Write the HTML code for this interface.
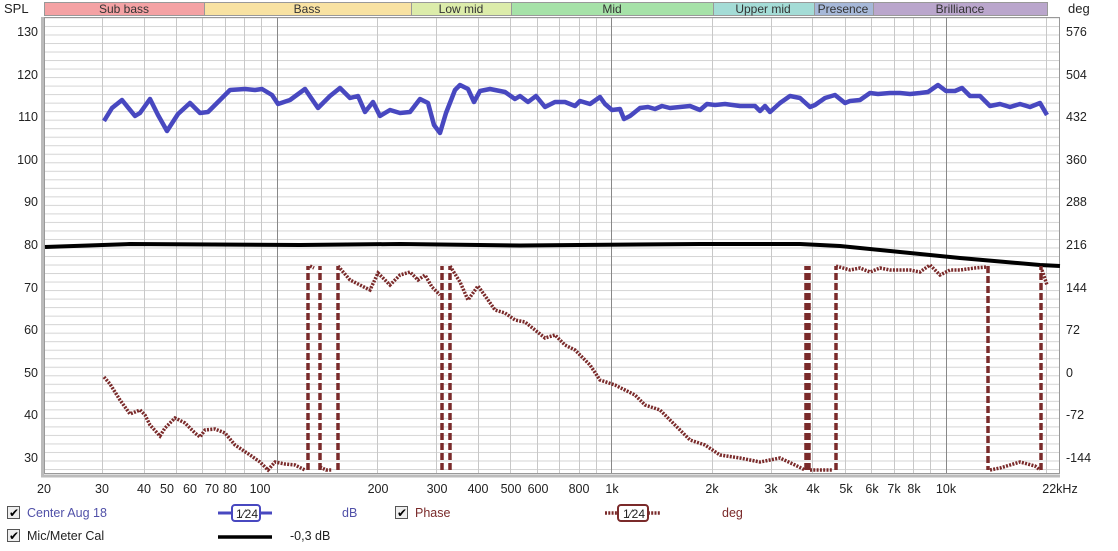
<!DOCTYPE html>
<html><head><meta charset="utf-8"><style>
body{margin:0;background:#fff;width:1118px;height:551px;overflow:hidden;font-family:"Liberation Sans",sans-serif}
svg{position:absolute;left:0;top:0}
</style></head><body>
<svg width="1118" height="551" viewBox="0 0 1118 551" font-family="Liberation Sans, sans-serif" font-size="12.5">
<defs>
<pattern id="hg" x="0" y="0.4" width="10" height="8.52" patternUnits="userSpaceOnUse">
<rect x="0" y="0" width="10" height="1" fill="#d4d4d4"/>
</pattern>
</defs>
<!-- bands -->
<g stroke="#999" stroke-width="1" font-size="12" fill="#333" text-anchor="middle">
<rect x="44.5" y="2.5" width="160" height="13" fill="#f4a2a4"/>
<rect x="204.5" y="2.5" width="207" height="13" fill="#f8e2a2"/>
<rect x="411.5" y="2.5" width="100" height="13" fill="#dcecaa"/>
<rect x="511.5" y="2.5" width="202" height="13" fill="#a6e2a8"/>
<rect x="713.5" y="2.5" width="101" height="13" fill="#a4dcd6"/>
<rect x="814.5" y="2.5" width="59" height="13" fill="#a6b8d8"/>
<rect x="873.5" y="2.5" width="174" height="13" fill="#baa6cc"/>
</g>
<g font-size="12" fill="#333" text-anchor="middle">
<text x="124" y="13">Sub bass</text><text x="307" y="13">Bass</text><text x="461" y="13">Low mid</text><text x="612" y="13">Mid</text><text x="763" y="13">Upper mid</text><text x="843" y="13">Presence</text><text x="960" y="13">Brilliance</text>
</g>
<text x="4" y="13" font-size="13" fill="#222">SPL</text>
<text x="1068" y="13" font-size="13" fill="#222">deg</text>
<!-- plot -->
<rect x="44" y="17" width="1016" height="457" fill="url(#hg)"/>
<g stroke="#c8c8c8" stroke-width="1">
<path d="M102.5 17V474M144.5 17V474M176.5 17V474M202.5 17V474M225.5 17V474M244.5 17V474M261.5 17V474M377.5 17V474M436.5 17V474M478.5 17V474M510.5 17V474M537.5 17V474M559.5 17V474M579.5 17V474M596.5 17V474M712.5 17V474M771.5 17V474M812.5 17V474M845.5 17V474M871.5 17V474M894.5 17V474M913.5 17V474M930.5 17V474M1046.5 17V474"/>
</g>
<g stroke="#888" stroke-width="1"><path d="M277.5 17V474M611.5 17V474M946.5 17V474"/></g>
<rect x="44.5" y="17.5" width="1015" height="456" fill="none" stroke="#999"/>
<path d="M42.5 17V476H1060" fill="none" stroke="#bbb" stroke-width="3"/>
<!-- left labels -->
<g font-size="12.5" fill="#222" text-anchor="end">
<text x="38" y="36">130</text><text x="38" y="79">120</text><text x="38" y="121">110</text><text x="38" y="164">100</text><text x="38" y="206">90</text><text x="38" y="249">80</text><text x="38" y="292">70</text><text x="38" y="334">60</text><text x="38" y="377">50</text><text x="38" y="419">40</text><text x="38" y="462">30</text>
</g>
<g font-size="12.5" fill="#222">
<text x="1066" y="36">576</text><text x="1066" y="79">504</text><text x="1066" y="121">432</text><text x="1066" y="164">360</text><text x="1066" y="206">288</text><text x="1066" y="249">216</text><text x="1066" y="292">144</text><text x="1066" y="334">72</text><text x="1066" y="377">0</text><text x="1066" y="419">-72</text><text x="1066" y="462">-144</text>
</g>
<g font-size="12.5" fill="#222" text-anchor="middle">
<text x="44" y="493">20</text><text x="102" y="493">30</text><text x="144" y="493">40</text><text x="167" y="493">50</text><text x="190" y="493">60</text><text x="212" y="493">70</text><text x="230" y="493">80</text><text x="260" y="493">100</text><text x="378" y="493">200</text><text x="437" y="493">300</text><text x="478" y="493">400</text><text x="511" y="493">500</text><text x="538" y="493">600</text><text x="579" y="493">800</text><text x="612" y="493">1k</text><text x="712" y="493">2k</text><text x="771" y="493">3k</text><text x="813" y="493">4k</text><text x="846" y="493">5k</text><text x="872" y="493">6k</text><text x="894" y="493">7k</text><text x="914" y="493">8k</text><text x="946" y="493">10k</text><text x="1060" y="493">22kHz</text>
</g>
<!-- black cal -->
<path d="M45 247 L130 244 L300 245 L400 244 L520 245.5 L700 244 L800 244 L840 246 L900 252 L960 258 L1040 265 L1060 266" fill="none" stroke="#000" stroke-width="4"/>
<!-- phase -->
<g fill="none" stroke="#7a2a2a">
<path stroke-width="3.5" stroke-dasharray="2,1.3" d="M104 377 L110 384 L120 400 L130 414 L140 410 L145 415 L150 425 L160 436 L165 428 L175 418 L185 423 L195 433 L200 437 L205 430 L215 429 L225 433 L235 445 L250 455 L260 462 L268 470 L275 462 L285 464 L295 465 L305 470 M310 266 L314 268 M320 467 L326 470 L332 470 M338 266 L350 280 L360 285 L370 290 L378 273 L390 285 L400 275 L410 272 L418 280 L425 275 L432 287 L440 295 M450 266 L460 282 L468 300 L478 286 L488 300 L495 310 L505 313 L515 320 L525 322 L535 330 L545 338 L555 335 L565 345 L575 350 L590 365 L600 380 L615 385 L625 390 L635 395 L645 405 L660 410 L675 425 L690 440 L705 445 L720 455 L740 458 L760 462 L780 458 L795 465 L805 470 M810 470 L820 470 L832 470 M836 266 L850 270 L860 268 L870 272 L880 268 L890 270 L910 270 L920 272 L930 265 L940 275 L950 270 L960 270 L975 268 L987 267 M990 470 L1000 468 L1020 462 L1035 466 L1040 470 M1042 270 L1047 285"/>
<path stroke-width="3.5" stroke-dasharray="7,3" d="M308 470V266M320 470V266M338 470V266M442 470V266M450 470V266M806 470V266M809 470V266M836 470V266M988 266V470M1041 470V266"/>
</g>
<!-- blue -->
<path d="M104 121 L112 108 L122 100 L135 116 L140 113 L150 99 L158 115 L167 131 L178 114 L190 103 L200 113 L208 112 L218 102 L230 90 L245 89 L255 90 L262 89 L272 95 L278 104 L290 100 L305 89 L318 108 L330 96 L340 88 L350 98 L358 96 L365 112 L373 102 L380 116 L390 110 L400 113 L410 112 L420 99 L428 103 L434 125 L440 133 L446 113 L455 90 L460 85 L468 89 L474 102 L480 91 L490 89 L505 92 L515 99 L520 96 L528 102 L536 96 L545 107 L555 102 L565 102 L575 106 L580 101 L590 104 L600 97 L605 104 L612 110 L620 109 L624 119 L630 116 L640 108 L648 107 L655 109 L662 106 L670 108 L680 107 L690 106 L700 110 L707 104 L715 105 L725 104 L740 106 L755 106 L760 111 L765 106 L770 112 L780 103 L790 96 L800 98 L810 107 L815 105 L825 98 L835 95 L845 103 L850 101 L860 100 L870 93 L878 94 L890 93 L900 93 L910 94 L920 93 L928 92 L938 85 L946 91 L955 91 L962 88 L970 96 L980 96 L990 106 L1000 104 L1010 107 L1020 104 L1030 107 L1040 103 L1047 115" fill="none" stroke="#4848c0" stroke-width="4.5" stroke-linejoin="round"/>
<!-- legend -->
<g>
<rect x="7.5" y="506.5" width="12" height="12" fill="#eee" stroke="#555"/><text x="9" y="517" font-size="12" fill="#000">✔</text>
<rect x="7.5" y="529.5" width="12" height="12" fill="#eee" stroke="#555"/><text x="9" y="540" font-size="12" fill="#000">✔</text>
<rect x="395.5" y="506.5" width="12" height="12" fill="#eee" stroke="#555"/><text x="397" y="517" font-size="12" fill="#000">✔</text>
<text x="27" y="517" font-size="12.5" fill="#5050a8">Center Aug 18</text>
<text x="27" y="540" font-size="12.5" fill="#222">Mic/Meter Cal</text>
<text x="415" y="517" font-size="12.5" fill="#7a2a2a">Phase</text>
<text x="342" y="517" font-size="12.5" fill="#5050a8">dB</text>
<text x="290" y="540" font-size="12.5" fill="#222">-0,3 dB</text>
<text x="722" y="517" font-size="12.5" fill="#7a2a2a">deg</text>
<path d="M218 513H272" stroke="#4848c0" stroke-width="3"/>
<rect x="232" y="505" width="28" height="16" rx="3" fill="#fff" stroke="#4848c0" stroke-width="2"/>
<text x="236" y="518" font-size="12" fill="#222">1⁄24</text>
<path d="M218 537H272" stroke="#000" stroke-width="3.5"/>
<path d="M605 513H661" stroke="#7a2a2a" stroke-width="3.5" stroke-dasharray="2,1.3"/>
<rect x="618" y="505" width="30" height="16" rx="3" fill="#fff" stroke="#7a2a2a" stroke-width="2"/>
<text x="623" y="518" font-size="12" fill="#222">1⁄24</text>
</g>
</svg>
</body></html>
